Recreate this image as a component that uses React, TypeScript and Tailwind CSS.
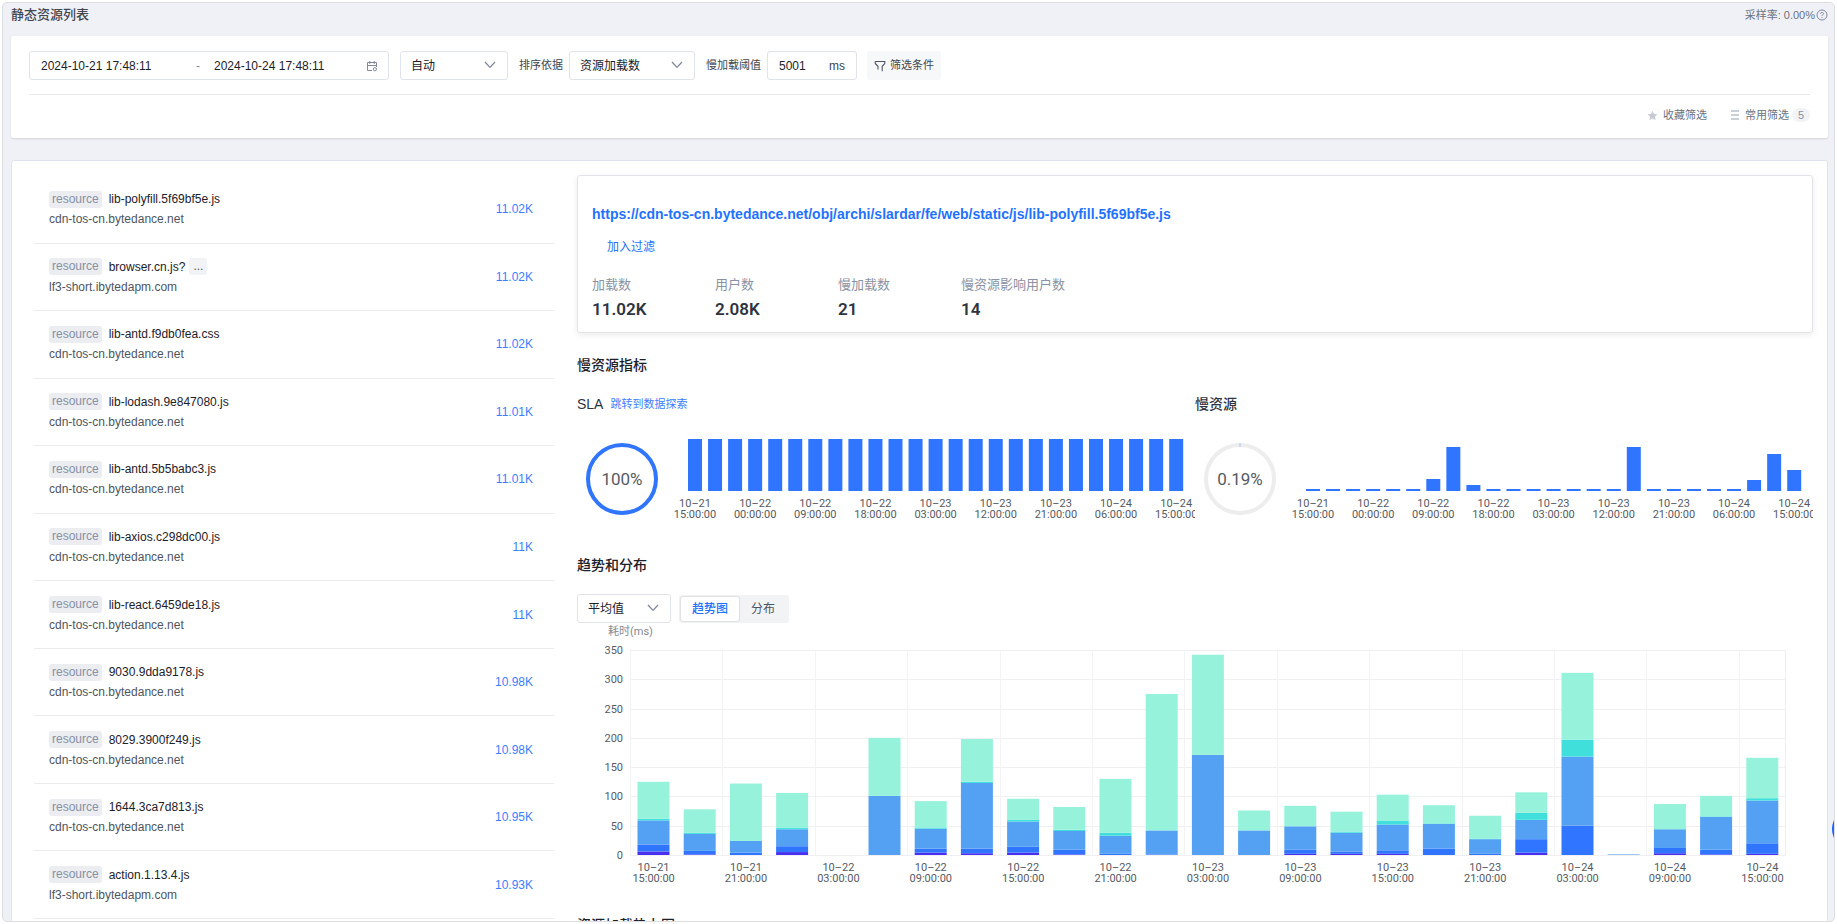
import { useState } from 'react';
import type { ReactNode, SelectHTMLAttributes } from 'react';
import clsx from 'clsx';

interface Resource {
  name: string;
  host: string;
  count: string;
  more?: boolean;
}

const CDN = 'cdn-tos-cn.bytedance.net';
const SHORT = 'lf3-short.ibytedapm.com';

const RESOURCES: Resource[] = [
  { name: 'lib-polyfill.5f69bf5e.js', host: CDN, count: '11.02K' },
  { name: 'browser.cn.js?', host: SHORT, count: '11.02K', more: true },
  { name: 'lib-antd.f9db0fea.css', host: CDN, count: '11.02K' },
  { name: 'lib-lodash.9e847080.js', host: CDN, count: '11.01K' },
  { name: 'lib-antd.5b5babc3.js', host: CDN, count: '11.01K' },
  { name: 'lib-axios.c298dc00.js', host: CDN, count: '11K' },
  { name: 'lib-react.6459de18.js', host: CDN, count: '11K' },
  { name: '9030.9dda9178.js', host: CDN, count: '10.98K' },
  { name: '8029.3900f249.js', host: CDN, count: '10.98K' },
  { name: '1644.3ca7d813.js', host: CDN, count: '10.95K' },
  { name: 'action.1.13.4.js', host: SHORT, count: '10.93K' },
];

const STATS = [
  { label: '加载数', value: '11.02K' },
  { label: '用户数', value: '2.08K' },
  { label: '慢加载数', value: '21' },
  { label: '慢资源影响用户数', value: '14' },
];

const SLA_BARS = Array.from({ length: 25 }, () => 52);
const SLOW_BARS = [2, 2, 2, 2, 2, 2, 12, 44, 6, 2, 2, 2, 2, 2, 2, 2, 44, 2, 2, 2, 2, 2, 11, 37, 21];

const SMALL_TICKS = [
  '10–21 15:00:00',
  '10–22 00:00:00',
  '10–22 09:00:00',
  '10–22 18:00:00',
  '10–23 03:00:00',
  '10–23 12:00:00',
  '10–23 21:00:00',
  '10–24 06:00:00',
  '10–24 15:00:00',
];

const TREND_TICKS = [
  '10–21 15:00:00',
  '10–21 21:00:00',
  '10–22 03:00:00',
  '10–22 09:00:00',
  '10–22 15:00:00',
  '10–22 21:00:00',
  '10–23 03:00:00',
  '10–23 09:00:00',
  '10–23 15:00:00',
  '10–23 21:00:00',
  '10–24 03:00:00',
  '10–24 09:00:00',
  '10–24 15:00:00',
];

const STACK_COLORS = ['#4a2fee', '#3075ff', '#54a1f4', '#41dfdc', '#96f2db'];

// 每一项为各层的累计高度(ms)
const TREND: number[][] = [
  [6, 18, 59, 62, 125],
  [1, 7, 36, 38, 78],
  [0, 4, 24, 24, 122],
  [5, 15, 44, 46, 106],
  [0, 0, 0, 0, 0],
  [0, 0, 101, 101, 200],
  [4, 11, 45, 47, 92],
  [3, 11, 123, 125, 198],
  [4, 14, 57, 60, 96],
  [1, 9, 41, 43, 82],
  [0, 2, 33, 38, 130],
  [0, 1, 42, 42, 275],
  [0, 0, 171, 171, 342],
  [0, 0, 42, 42, 76],
  [2, 9, 49, 49, 84],
  [2, 6, 38, 40, 74],
  [2, 8, 52, 58, 103],
  [0, 11, 53, 54, 85],
  [0, 2, 27, 28, 67],
  [4, 27, 60, 72, 107],
  [0, 50, 168, 197, 311],
  [0, 0, 1, 1, 1],
  [3, 12, 44, 44, 87],
  [1, 9, 65, 66, 101],
  [2, 20, 93, 97, 166],
];

function AxisLabel({ x, y, text }: { x: number; y: number; text: string }) {
  const [date, time] = text.split(' ');
  return (
    <text textAnchor="middle" className="fill-[#565b63]">
      <tspan x={x} y={y}>{date}</tspan>
      <tspan x={x} y={y + 11}>{time}</tspan>
    </text>
  );
}

function MiniBars({ values, label }: { values: number[]; label: string }) {
  const step = 20.05;
  return (
    <svg viewBox="0 0 528 110" role="img" aria-label={label} className="block min-w-0 flex-1 font-[Roboto] text-[11px]">
      {values.map((v, i) => (
        <rect key={i} x={21 + i * step} y={77 - v} width={14} height={v} fill="#3075ff" />
      ))}
      {SMALL_TICKS.map((t, i) => (
        <AxisLabel key={t} x={28 + i * 3 * step} y={93} text={t} />
      ))}
    </svg>
  );
}

function Ring({ text, color, tick }: { text: string; color: string; tick?: boolean }) {
  return (
    <svg viewBox="0 0 90 110" className="block w-[90px] shrink-0 font-[Roboto] text-[17px]">
      <circle cx={45} cy={65} r={34} fill="none" stroke={color} strokeWidth={4} />
      {tick && <path d="M45 29v4" stroke="#a9c5ff" />}
      <text x={45} y={71} textAnchor="middle" className="fill-[#565b63]">{text}</text>
    </svg>
  );
}

function TrendChart() {
  const left = 53.5;
  const band = 46.2;
  const bottom = 232;
  const scale = 205 / 350;
  const right = left + band * TREND.length;
  const y = (v: number) => bottom - v * scale;

  return (
    <svg viewBox="0 0 1236 264" role="img" aria-label="趋势图" className="block w-full font-[Roboto,'Noto_Sans_CJK_SC',sans-serif] text-[11px]">
      <text x={left} y={12} textAnchor="middle" className="fill-[#86898f]">耗时(ms)</text>
      {[0, 50, 100, 150, 200, 250, 300, 350].map((v) => (
        <g key={v}>
          <path d={`M${left} ${Math.round(y(v)) + 0.5}H${right}`} stroke="#f0f0f2" />
          <text x={46} y={y(v) + 4} textAnchor="end" className="fill-[#565b63]">{v}</text>
        </g>
      ))}
      {TREND_TICKS.map((t, i) => (
        <g key={t}>
          <path d={`M${Math.floor(left + i * 2 * band) + 0.5} 27V${bottom}`} stroke="#f3f3f5" />
          <AxisLabel x={left + (i * 2 + 0.5) * band} y={248} text={t} />
        </g>
      ))}
      <path d={`M${right} 27V${bottom}`} stroke="#f0f0f2" />
      {TREND.map((stack, i) =>
        stack.map((v, layer) => {
          const base = layer === 0 ? 0 : stack[layer - 1];
          if (v <= base) return null;
          return (
            <rect
              key={`${i}-${layer}`}
              x={left + i * band + 7}
              y={y(v)}
              width={32}
              height={(v - base) * scale}
              fill={STACK_COLORS[layer]}
            />
          );
        })
      )}
    </svg>
  );
}

function Select({ children, className, ...rest }: SelectHTMLAttributes<HTMLSelectElement>) {
  return (
    <div className={clsx('relative h-[29px]', className)}>
      <select
        {...rest}
        className="h-full w-full appearance-none rounded-[3px] border border-[#dfe3ec] bg-white pl-[10px] text-xs text-[#1d2129] outline-none"
      >
        {children}
      </select>
      <svg viewBox="0 0 12 8" className="pointer-events-none absolute top-[10px] right-3 h-2 w-3" fill="none" stroke="#80899c" strokeWidth="1.3">
        <path d="M1 1l5 5.4L11 1" />
      </svg>
    </div>
  );
}

function SectionTitle({ children, className }: { children: ReactNode; className?: string }) {
  return <h2 className={clsx('text-sm leading-6 font-medium text-[#1d2129]', className)}>{children}</h2>;
}

function ResourceRow({ item }: { item: Resource }) {
  return (
    <li className="flex items-center justify-between border-b border-[#ebecee] pr-[21px] pl-[15px]">
      <div className="text-xs leading-5">
        <div className="flex items-center">
          <span className="rounded-[3px] bg-[#ebedf1] px-[3px] leading-[17px] text-[#8890a3]">resource</span>
          <span className="ml-[7px] text-[#1d2129]">{item.name}</span>
          {item.more && (
            <button type="button" className="ml-1 w-[18px] rounded-[3px] bg-[#f2f3f5] text-center leading-[17px] text-[#4e5969]">...</button>
          )}
        </div>
        <p className="text-[#4e5560]">{item.host}</p>
      </div>
      <span className="text-xs text-[#3d7eff]">{item.count}</span>
    </li>
  );
}

function Filters() {
  return (
    <section className="rounded-[2px] bg-white px-[18px] pt-[15px] pb-[3px] shadow-[0_1px_2px_rgba(0,0,0,0.12)]">
      <div className="flex items-center text-[11px] text-[#42464e]">
        <div className="flex h-[29px] w-[360px] items-center rounded-[3px] border border-[#dfe3ec] pr-[10px] pl-[11px] text-xs text-[#1d2129]">
          <input aria-label="开始时间" defaultValue="2024-10-21 17:48:11" className="w-[152px] outline-none" />
          <span className="w-[21px] pl-[3px] text-[#80899c]">-</span>
          <input aria-label="结束时间" defaultValue="2024-10-24 17:48:11" className="min-w-0 flex-1 outline-none" />
          <svg viewBox="0 0 12 12" className="h-3 w-3" fill="none" stroke="#80899c">
            <path d="M6 10.500H1.500V2.500H10.500V7M1.500 5.500H10.500M3.800 1v3M8.200 1v3" />
            <circle cx="8.900" cy="9.200" r="1.600" />
          </svg>
        </div>
        <Select aria-label="时间粒度" className="ml-[11px] w-[108px]">
          <option>自动</option>
        </Select>
        <label htmlFor="sort" className="ml-[11px]">排序依据</label>
        <Select id="sort" className="ml-[6px] w-[126px]">
          <option>资源加载数</option>
        </Select>
        <label htmlFor="threshold" className="ml-[11px]">慢加载阈值</label>
        <div className="ml-[6px] flex h-[29px] w-[90px] items-center rounded-[3px] border border-[#dfe3ec] px-[11px] text-xs">
          <input id="threshold" defaultValue="5001" className="min-w-0 flex-1 text-[#1d2129] outline-none" />
          <span>ms</span>
        </div>
        <button type="button" className="ml-[10px] flex h-[29px] items-center gap-1 rounded-[3px] bg-[#f7f8fa] px-[7px]">
          <svg viewBox="0 0 12 12" className="h-3 w-3" fill="none" stroke="#4e5360" strokeWidth="1.1">
            <path d="M1.2 1.5h9.6v2L8.2 6.3v4.9M1.2 1.5v2L4 6.3v3.2" />
          </svg>
          筛选条件
        </button>
      </div>
      <div className="mt-[14px] flex h-[41px] items-center justify-end border-t border-[#e8eaee] text-[11px] text-[#6b7280]">
        <button type="button" className="flex items-center gap-[5px]">
          <svg viewBox="0 0 12 12" className="h-[11px] w-[11px]" fill="#c6cad3">
            <path d="M6 .8l1.6 3.5 3.8.4-2.9 2.6.9 3.8L6 9.2l-3.4 1.9.9-3.8L.6 4.7l3.8-.4z" />
          </svg>
          收藏筛选
        </button>
        <button type="button" className="ml-6 flex items-center">
          <svg viewBox="0 0 8 10" className="mr-[6px] h-[10px] w-2" stroke="#b9bec8" strokeWidth="1.4">
            <path d="M0 1h8M0 5h8M0 9h8" />
          </svg>
          常用筛选
          <span className="ml-[3px] w-[18px] rounded-full bg-[#f2f3f5] text-center leading-[14px] text-[#8890a3]">5</span>
        </button>
      </div>
    </section>
  );
}

function ResourceCard() {
  return (
    <section className="rounded-[3px] border border-[#e2e4e9] px-[14px] pt-7 pb-[11px] shadow-[0_2px_6px_rgba(0,0,0,0.08)]">
      <a href="#resource" className="block text-sm leading-5 font-bold text-[#1f72ff]">
        https://cdn-tos-cn.bytedance.net/obj/archi/slardar/fe/web/static/js/lib-polyfill.5f69bf5e.js
      </a>
      <button type="button" className="mt-[13px] ml-[15px] block text-xs leading-5 text-[#1f72ff]">加入过滤</button>
      <dl className="mt-[18px] flex">
        {STATS.map((s) => (
          <div key={s.label} className="min-w-[123px]">
            <dt className="text-[13px] leading-5 text-[#8a92a3]">{s.label}</dt>
            <dd className="mt-[2px] font-[Roboto] text-[17px] leading-6 font-semibold text-[#2e3440]">{s.value}</dd>
          </div>
        ))}
      </dl>
    </section>
  );
}

export default function App() {
  const [tab, setTab] = useState('trend');
  const tabClass = (name: string) =>
    clsx(
      'h-6 rounded-[2px]',
      tab === name ? 'bg-white font-medium text-[#1f72ff] shadow-[0_0_2px_rgba(0,0,0,0.25)]' : 'text-[#4e5560]'
    );

  return (
    <div className="h-screen bg-white p-[2px] font-['Liberation_Sans','Noto_Sans_CJK_SC',sans-serif]">
      <div className="relative h-full overflow-hidden rounded-[5px] border border-[#dcdde1] bg-[#f0f1f6] pr-[6px] pl-2">
        <header className="flex h-[33px] items-start justify-between pt-[2px] leading-5">
          <h1 className="text-[13px] font-medium text-[#42464e]">静态资源列表</h1>
          <div className="flex items-center text-[11px] text-[#6b7280]">
            采样率: 0.00%
            <svg viewBox="0 0 12 12" className="ml-px h-3 w-3" fill="none" stroke="#80899c">
              <circle cx="6" cy="6" r="5" />
              <path d="M4.5 4.8C4.5 3 7.500 3 7.500 4.700C7.500 5.700 6 5.700 6 7M6 8v1" />
            </svg>
          </div>
        </header>

        <Filters />

        <main className="mt-[22px] flex gap-[23px] rounded-[3px] border border-[#dfe4ef] bg-white pr-[14px] pl-[22px]">
          <ul className="mt-[15px] grid min-h-[743px] w-[520px] shrink-0 auto-rows-fr self-start">
            {RESOURCES.map((r) => (
              <ResourceRow key={r.name} item={r} />
            ))}
          </ul>

          <div className="min-w-0 flex-1 pt-[14px]">
            <ResourceCard />

            <SectionTitle className="mt-5">慢资源指标</SectionTitle>
            <div className="mt-[17px] grid grid-cols-2">
              <div>
                <h3 className="flex items-center gap-[7px] text-sm leading-5 text-[#2e3440]">
                  SLA
                  <a href="#explore" className="text-[11px] text-[#3d7eff]">跳转到数据探索</a>
                </h3>
                <div className="flex">
                  <Ring text="100%" color="#3075ff" />
                  <MiniBars values={SLA_BARS} label="SLA" />
                </div>
              </div>
              <div>
                <h3 className="text-sm leading-5 font-medium text-[#2e3440]">慢资源</h3>
                <div className="flex">
                  <Ring text="0.19%" color="#ededed" tick />
                  <MiniBars values={SLOW_BARS} label="慢资源" />
                </div>
              </div>
            </div>

            <SectionTitle className="mt-[29px]">趋势和分布</SectionTitle>
            <div className="mt-[17px] flex items-center">
              <Select aria-label="统计方式" className="w-[94px]">
                <option>平均值</option>
              </Select>
              <div className="ml-2 flex h-7 items-center rounded-[3px] bg-[#f2f3f5] px-[2px] text-xs">
                <button type="button" onClick={() => setTab('trend')} className={clsx('w-[58px]', tabClass('trend'))}>趋势图</button>
                <button type="button" onClick={() => setTab('dist')} className={clsx('w-12', tabClass('dist'))}>分布</button>
              </div>
            </div>
            <TrendChart />

            <SectionTitle className="mt-[26px]">资源加载热力图</SectionTitle>
          </div>
        </main>

        <button type="button" aria-label="帮助" className="absolute top-[805px] -right-10 h-[42px] w-[42px] rounded-full bg-[#1664ff]" />
      </div>
    </div>
  );
}
